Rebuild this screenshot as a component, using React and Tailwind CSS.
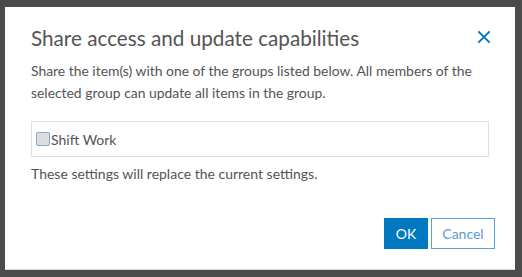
// Share access dialog over a dimmed page
export default function App() {
  return (
    <div className="w-[522px] h-[277px] bg-[#4b4b4b] pt-[7px] pl-[5px] overflow-hidden" style={{ fontFamily: "Lato, 'Noto Sans', sans-serif" }}>
      <div className="w-[510px] h-[263px] bg-white border-b border-[#d8d8d8] flex flex-col pl-[26px] pr-[26px] pt-[17px] text-[#545454]">
        {/* Header */}
        <div className="flex items-start justify-between">
          <h2 className="text-[20.7px] leading-[28px]">Share access and update capabilities</h2>
          <button className="mt-[6px] mr-[-2px] text-[#0079c1]">
            <svg width="14" height="14" viewBox="0 0 16 16" fill="none" stroke="currentColor" strokeWidth="2.2">
              <path d="M1.5 1.5l13 13M14.5 1.5l-13 13" />
            </svg>
          </button>
        </div>

        {/* Body */}
        <p className="mt-[8px] text-[13.9px] leading-[22px]">
          Share the item(s) with one of the groups listed below. All members of the selected group can update all items in the group.
        </p>

        <div className="mt-[17px] h-[36px] border border-[#e0e0e0] flex items-center pl-[4px]">
          <label className="flex items-center text-[14px]">
            <span className="w-[14px] h-[14px] border border-[#7fa7e0] bg-[#dcdcdc] rounded-[2px]" />
            <span className="ml-[1px]">Shift Work</span>
          </label>
        </div>

        <p className="mt-[6px] text-[14px] leading-[22px]">These settings will replace the current settings.</p>

        {/* Footer */}
        <div className="mt-auto mb-[20px] flex justify-end gap-[3px] mr-[-6px]">
          <button className="h-[31px] w-[44px] bg-[#0079c1] text-white text-[14px]">OK</button>
          <button className="h-[31px] w-[64px] border border-[#5aa2dc] text-[#5b9bd5] text-[14px]">Cancel</button>
        </div>
      </div>
    </div>
  );
}
